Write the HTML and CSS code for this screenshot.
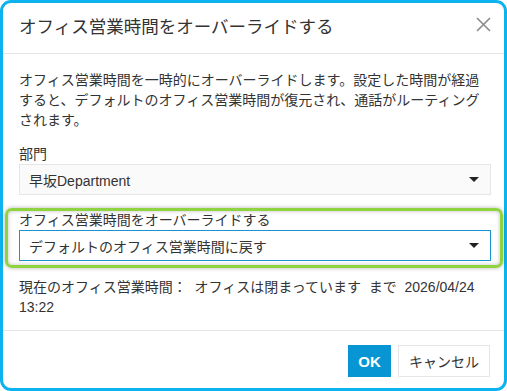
FILE: index.html
```html
<!DOCTYPE html>
<html lang="ja">
<head>
    <meta charset="UTF-8">
    <meta name="viewport" content="width=device-width, initial-scale=1.0">
    <title>オフィス営業時間をオーバーライドする</title>
    <link rel="stylesheet" href="styles.css">
</head>
<body>
    <div class="dialog">
        <div class="dialog-header">
            <h1>オフィス営業時間をオーバーライドする</h1>
            <button class="close" aria-label="閉じる">
                <svg width="15" height="15" viewBox="0 0 15 15">
                    <path d="M1 1 L14 14 M14 1 L1 14" stroke="#8a8a8a" stroke-width="1.6" fill="none"/>
                </svg>
            </button>
        </div>

        <div class="dialog-body">
            <p class="intro">オフィス営業時間を一時的にオーバーライドします。設定した時間が経過すると、デフォルトのオフィス営業時間が復元され、通話がルーティングされます。</p>

            <div class="field">
                <label>部門</label>
                <div class="select">
                    <span>早坂Department</span>
                    <span class="caret"></span>
                </div>
            </div>

            <div class="field highlight">
                <label>オフィス営業時間をオーバーライドする</label>
                <div class="select active">
                    <span>デフォルトのオフィス営業時間に戻す</span>
                    <span class="caret"></span>
                </div>
            </div>

            <p class="current">現在のオフィス営業時間：&nbsp; オフィスは閉まっています &nbsp;まで&nbsp; 2026/04/24 13:22</p>
        </div>

        <div class="dialog-footer">
            <button class="btn btn-primary">OK</button>
            <button class="btn">キャンセル</button>
        </div>
    </div>
</body>
</html>
```

FILE: styles.css
```css
html, body {
    margin: 0;
    padding: 0;
    background: #fff;
}
body {
    font-family: "Liberation Sans", "Noto Sans CJK JP", sans-serif;
    color: #333;
    font-size: 14px;
}
.dialog {
    width: 507px;
    height: 391px;
    box-sizing: border-box;
    border: 3px solid #0cb3ee;
    border-radius: 11px;
    background: #fff;
    display: flex;
    flex-direction: column;
}
.dialog-header {
    display: flex;
    align-items: center;
    justify-content: space-between;
    padding: 12px 13px 14px 16px;
    border-bottom: 1px solid #e6e6e6;
}
.dialog-header h1 {
    margin: 0;
    font-size: 17.5px;
    font-weight: normal;
    line-height: 24px;
    color: #333;
}
.close {
    border: none;
    background: none;
    padding: 0;
    width: 15px;
    height: 15px;
    margin-top: -5px;
    cursor: pointer;
}
.close svg {
    display: block;
}
.dialog-body {
    flex: 1;
    padding: 16px 13px 0 16px;
}
.intro {
    margin: 0;
    line-height: 20px;
}
.field {
    margin-top: 15px;
}
.field label {
    display: block;
    line-height: 18px;
    margin-bottom: 1px;
}
.select {
    height: 31px;
    box-sizing: border-box;
    border: 1px solid #e6e6e6;
    background: #fafafa;
    display: flex;
    align-items: center;
    justify-content: space-between;
    padding: 0 11px 0 9px;
}
.select.active {
    border-color: #1a93cf;
    background: #fff;
}
.caret {
    width: 0;
    height: 0;
    border-left: 5px solid transparent;
    border-right: 5px solid transparent;
    border-top: 5px solid #222;
}
.highlight {
    position: relative;
    margin-top: 16px;
}
.highlight::before {
    content: "";
    position: absolute;
    left: -14px;
    right: -12px;
    top: -3px;
    bottom: -7px;
    border: 3px solid #8fd340;
    border-radius: 7px;
    box-shadow: 0 0 4px rgba(0, 0, 0, 0.3), inset 0 0 4px rgba(0, 0, 0, 0.25);
    pointer-events: none;
}
.current {
    margin: 16px 0 0 0;
    line-height: 20px;
}
.dialog-footer {
    display: flex;
    justify-content: flex-end;
    gap: 7px;
    padding: 14px 14px 11px 16px;
    border-top: 1px solid #e6e6e6;
}
.btn {
    height: 32px;
    padding: 0 10px;
    border: 1px solid #e6e6e6;
    background: #fff;
    color: #333;
    font-family: "Liberation Sans", "Noto Sans CJK JP", sans-serif;
    font-size: 14px;
    cursor: pointer;
}
.btn-primary {
    background: #0895d4;
    border-color: #0895d4;
    color: #fff;
    font-size: 15px;
    font-weight: bold;
    width: 43px;
    padding: 0;
}
```
